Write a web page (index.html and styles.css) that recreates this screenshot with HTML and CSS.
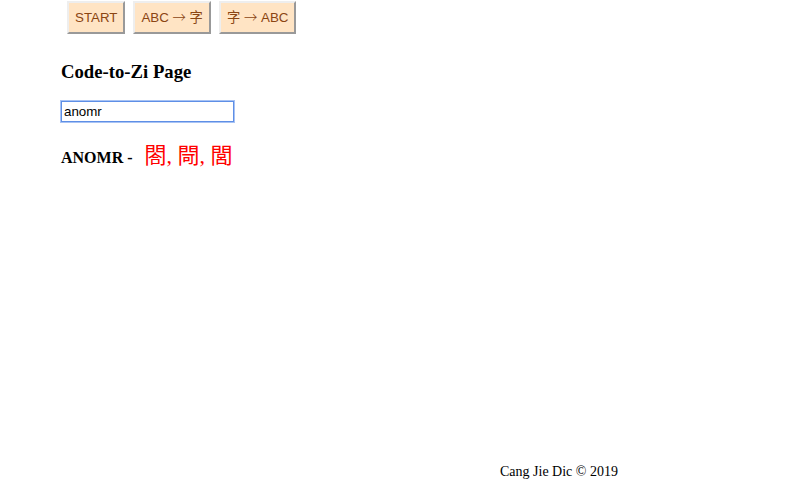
FILE: index.html
```html
<!DOCTYPE html>
<html lang="zh-Hant">
<head>
<meta charset="utf-8">
<title>Code-to-Zi Page</title>
<link rel="stylesheet" href="styles.css">
</head>
<body>
<div class="page">
  <nav class="nav">
    <button class="nav-btn" type="button">START</button>
    <button class="nav-btn" type="button">ABC <span class="arrow">→</span> 字</button>
    <button class="nav-btn" type="button">字 <span class="arrow">→</span> ABC</button>
  </nav>
  <main class="content">
    <h3 class="title">Code-to-Zi Page</h3>
    <form class="search">
      <input class="code-input" type="text" value="anomr">
    </form>
    <h4 class="result">ANOMR - <span class="zi">閤, 閜, 閭</span></h4>
  </main>
  <footer class="footer">Cang Jie Dic © 2019</footer>
</div>
</body>
</html>
```
FILE: styles.css
```css
html, body {
  margin: 0;
  padding: 0;
  background: #ffffff;
}
body {
  font-family: "Liberation Serif", "Noto Sans CJK TC", serif;
  color: #000000;
}
.page {
  min-height: 482px;
  display: flex;
  flex-direction: column;
}
.nav {
  display: flex;
  gap: 8px;
  padding: 1px 0 0 67px;
}
.nav-btn {
  font-family: "Liberation Sans", "Noto Sans CJK TC", sans-serif;
  font-size: 13.33px;
  line-height: 16px;
  color: #8b4513;
  background: #ffe4c4;
  border: 2px solid;
  border-color: #eeeeee #999999 #999999 #eeeeee;
  padding: 6px 6px;
  margin: 0;
}
.arrow {
  font-family: "Noto Sans CJK TC", sans-serif;
  font-weight: 300;
}
.content {
  padding-left: 61px;
}
.title {
  font-size: 18.72px;
  font-weight: bold;
  margin: 28px 0 0 0;
  line-height: 20.7px;
}
.search {
  margin: 18.5px 0 0 0;
  display: flex;
}
.code-input {
  font-family: "Liberation Sans", sans-serif;
  font-size: 13.33px;
  width: 173px;
  height: 21px;
  box-sizing: border-box;
  padding: 1px 2px;
  border: 1px solid #5e8fe6;
  box-shadow: 0 0 0 1px #a8c3f4;
  outline: none;
  margin: 0;
  color: #000;
}
.result {
  font-size: 16px;
  font-weight: bold;
  margin: 19.6px 0 0 0;
  line-height: 28px;
}
.zi {
  font-size: 22px;
  font-weight: normal;
  color: #ff0000;
  margin-left: 8px;
}
.footer {
  margin-top: auto;
  padding: 0 0 3px 500px;
  font-size: 14px;
  line-height: 15.5px;
}
```
